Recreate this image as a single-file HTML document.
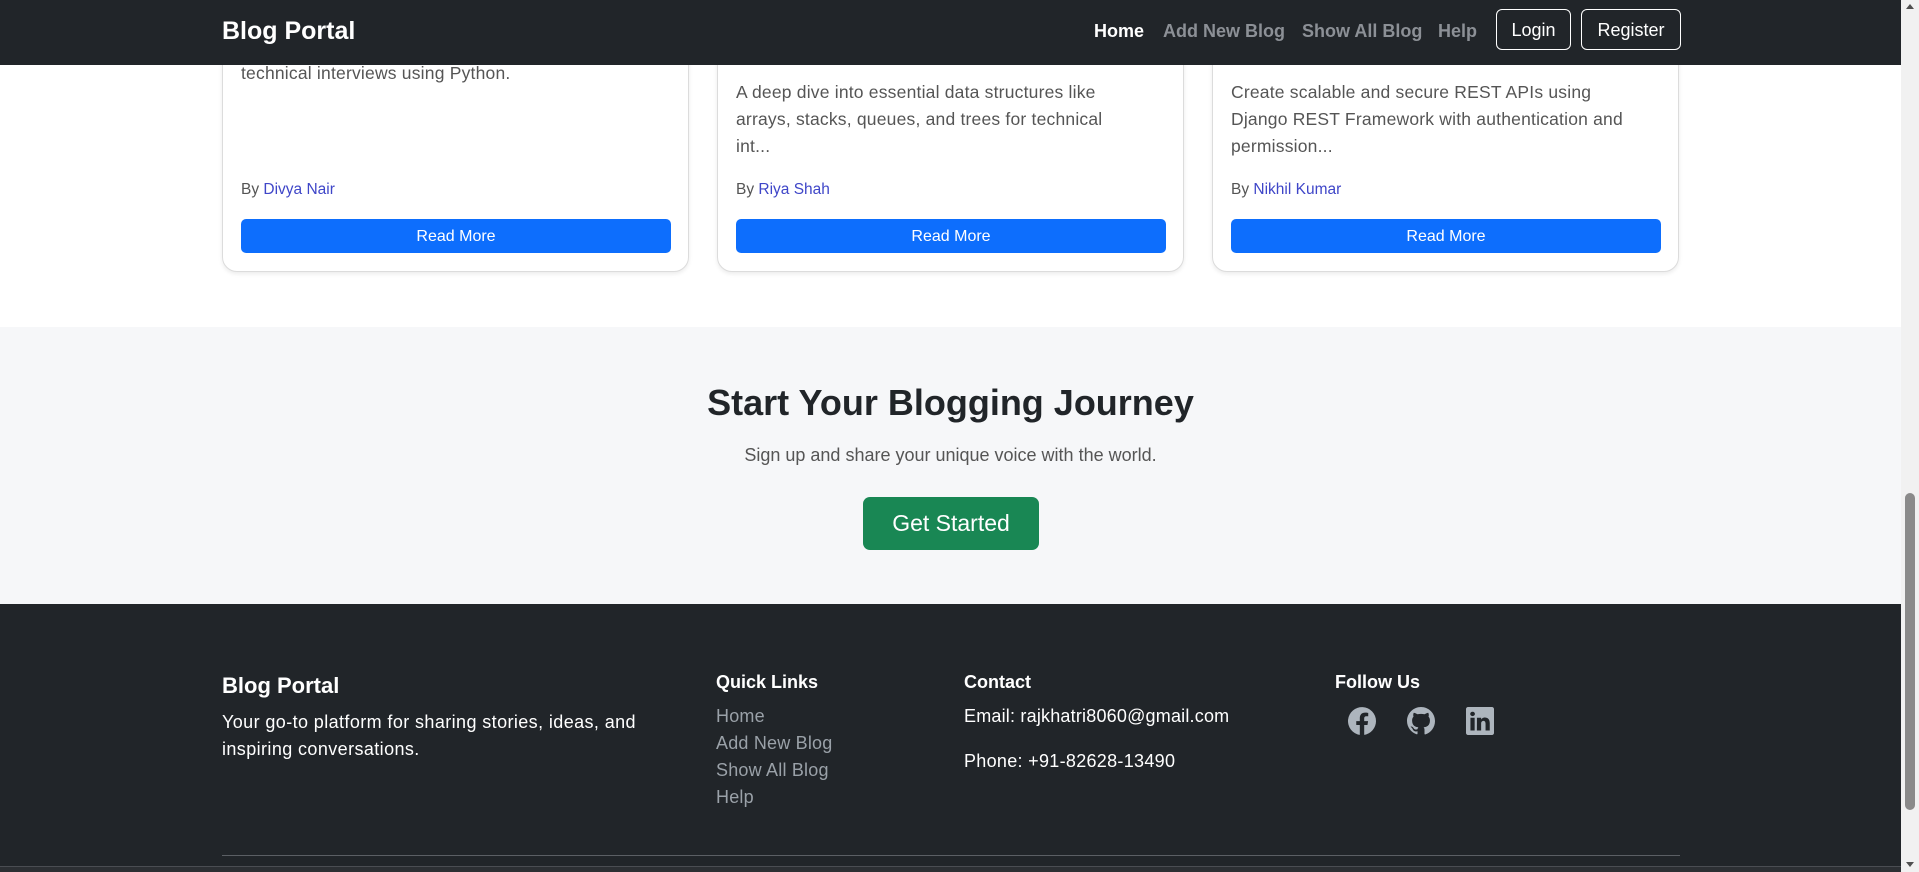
<!DOCTYPE html>
<html><head><meta charset="utf-8"><style>
*{margin:0;padding:0;box-sizing:border-box}
body{width:1919px;height:872px;overflow:hidden;font-family:"Liberation Sans",sans-serif;background:#fff;position:relative}
.a{position:absolute;white-space:nowrap}
.nav{position:absolute;left:0;top:0;width:1901px;height:65px;background:#212529}
.card{position:absolute;top:-20px;width:467px;height:292px;border:1px solid #dcdcdc;border-radius:15px;background:#fff;box-shadow:0 2px 4px rgba(0,0,0,.08)}
.txt{font-size:17.5px;color:#555;line-height:27px;letter-spacing:.2px}
.by{font-size:15.5px;color:#555}
.by span{color:#3f46c8}
.btn{position:absolute;height:34px;width:430px;background:#0d6efd;color:#fff;border-radius:5px;font-size:16px;text-align:center;line-height:35px}
.fl{font-size:18px;color:#9aa1a8;letter-spacing:.2px}
</style></head><body>
<div class="card" style="left:222px"></div>
<div class="card" style="left:717px"></div>
<div class="card" style="left:1212px"></div>
<div class="a txt" style="left:241px;top:60px">technical interviews using Python.</div>
<div class="a txt" style="left:736px;top:79px">A deep dive into essential data structures like<br>arrays, stacks, queues, and trees for technical<br>int...</div>
<div class="a txt" style="left:1231px;top:79px">Create scalable and secure REST APIs using<br>Django REST Framework with authentication and<br>permission...</div>
<div class="a by" style="left:241px;top:181px">By <span>Divya Nair</span></div>
<div class="a by" style="left:736px;top:181px">By <span>Riya Shah</span></div>
<div class="a by" style="left:1231px;top:181px">By <span>Nikhil Kumar</span></div>
<div class="btn" style="left:241px;top:219px">Read More</div>
<div class="btn" style="left:736px;top:219px">Read More</div>
<div class="btn" style="left:1231px;top:219px">Read More</div>

<div class="nav"></div>
<div class="a" style="left:222px;top:17px;font-size:25px;font-weight:bold;color:#fff">Blog Portal</div>
<div class="a" style="left:1094px;top:21px;font-size:18px;font-weight:bold;color:#fff">Home</div>
<div class="a" style="left:1163px;top:21px;font-size:18px;font-weight:bold;color:#8c9096">Add New Blog</div>
<div class="a" style="left:1302px;top:21px;font-size:18px;font-weight:bold;color:#8c9096">Show All Blog</div>
<div class="a" style="left:1438px;top:21px;font-size:18px;font-weight:bold;color:#8c9096">Help</div>
<div class="a" style="left:1496px;top:9px;width:75px;height:41px;border:1px solid #fff;border-radius:6px;color:#fff;font-size:18px;text-align:center;line-height:40px">Login</div>
<div class="a" style="left:1581px;top:9px;width:100px;height:41px;border:1px solid #fff;border-radius:6px;color:#fff;font-size:18px;text-align:center;line-height:40px">Register</div>

<div class="a" style="left:0;top:327px;width:1901px;height:277px;background:#f6f7f9"></div>
<div class="a" style="left:0;width:1901px;top:382px;text-align:center;font-size:36px;font-weight:bold;color:#212529">Start Your Blogging Journey</div>
<div class="a" style="left:0;width:1901px;top:445px;text-align:center;font-size:18px;color:#555">Sign up and share your unique voice with the world.</div>
<div class="a" style="left:863px;top:497px;width:176px;height:53px;background:#198754;border-radius:7px;color:#fff;font-size:23px;text-align:center;line-height:53px">Get Started</div>

<div class="a" style="left:0;top:604px;width:1901px;height:268px;background:#212529"></div>
<div class="a" style="left:222px;top:673px;font-size:22px;font-weight:bold;color:#fff">Blog Portal</div>
<div class="a" style="left:222px;top:709px;font-size:18px;color:#fff;line-height:27px;letter-spacing:.4px">Your go-to platform for sharing stories, ideas, and<br>inspiring conversations.</div>
<div class="a" style="left:716px;top:672px;font-size:18px;font-weight:bold;color:#fff">Quick Links</div>
<div class="a fl" style="left:716px;top:706px">Home</div>
<div class="a fl" style="left:716px;top:733px">Add New Blog</div>
<div class="a fl" style="left:716px;top:760px">Show All Blog</div>
<div class="a fl" style="left:716px;top:787px">Help</div>
<div class="a" style="left:964px;top:672px;font-size:18px;font-weight:bold;color:#fff">Contact</div>
<div class="a" style="left:964px;top:706px;font-size:18px;color:#fff;letter-spacing:.2px">Email: rajkhatri8060@gmail.com</div>
<div class="a" style="left:964px;top:751px;font-size:18px;color:#fff;letter-spacing:.3px">Phone: +91-82628-13490</div>
<div class="a" style="left:1335px;top:672px;font-size:18px;font-weight:bold;color:#fff">Follow Us</div>
<svg class="a" style="left:1348px;top:707px" width="28" height="28" viewBox="0 0 16 16"><path fill="#adb5bd" d="M16 8.05A8 8 0 1 0 6.750 15.95V10.3H4.72V8.05h2.03V6.3c0-2 1.2-3.12 3.020-3.12.88 0 1.79.16 1.79.16v1.97h-1c-1 0-1.3.62-1.3 1.25v1.5h2.22l-.35 2.25H9.26v5.64A8 8 0 0 0 16 8.05"/></svg>
<svg class="a" style="left:1407px;top:707px" width="28" height="28" viewBox="0 0 16 16"><path fill="#adb5bd" d="M8 0C3.58 0 0 3.58 0 8c0 3.54 2.29 6.53 5.47 7.59.4.07.55-.17.55-.38v-1.33c-2.23.48-2.7-1.07-2.7-1.07-.36-.92-.89-1.170-.89-1.17-.73-.5.05-.49.05-.49.8.06 1.23.83 1.23.83.72 1.22 1.87.87 2.33.66.07-.52.28-.87.51-1.07-1.78-.2-3.64-.89-3.64-3.95 0-.87.31-1.59.82-2.15-.08-.2-.36-1.02.08-2.12 0 0 .67-.21 2.2.82a7.6 7.6 0 0 1 4 0c1.53-1.04 2.2-.82 2.2-.82.44 1.1.16 1.92.08 2.12.51.56.82 1.27.82 2.15 0 3.07-1.87 3.75-3.65 3.95.29.25.54.73.54 1.48v2.2c0 .21.15.46.55.38A8 8 0 0 0 16 8c0-4.42-3.58-8-8-8"/></svg>
<svg class="a" style="left:1466px;top:707px" width="28" height="28" viewBox="0 0 16 16"><path fill="#adb5bd" d="M0 1.15C0 .52.53 0 1.18 0h13.64C15.47 0 16 .52 16 1.15v13.7c0 .63-.53 1.15-1.18 1.15H1.18C.53 16 0 15.48 0 14.85zM4.94 13.4V6.17H2.54v7.23zM3.74 5.18c.84 0 1.36-.55 1.36-1.25-.02-.71-.52-1.25-1.34-1.25S2.4 3.22 2.4 3.93c0 .7.52 1.25 1.32 1.25zm4.91 8.22V9.36c0-.21.02-.43.08-.58.17-.43.57-.88 1.23-.88.87 0 1.21.66 1.21 1.63v3.87h2.4V9.25c0-2.22-1.18-3.25-2.76-3.250-1.27 0-1.84.7-2.16 1.19v.03h-.02l.02-.03V6.17h-2.4c.03.68 0 7.230 0 7.23z"/></svg>
<div class="a" style="left:222px;top:855px;width:1458px;height:1px;background:#5b5f64"></div>
<div class="a" style="left:0;top:866px;width:1901px;height:6px;background:#2c2f33;border-top:1px solid #4a4d52"></div>

<div class="a" style="left:1901px;top:0;width:18px;height:872px;background:#f1f1f1"></div>
<div class="a" style="left:1905px;top:493px;width:10px;height:317px;background:#8a8a8a;border-radius:5px"></div>
<div class="a" style="left:1906px;top:4px;width:0;height:0;border-left:4px solid transparent;border-right:4px solid transparent;border-bottom:5px solid #505050"></div>
<div class="a" style="left:1906px;top:862px;width:0;height:0;border-left:4px solid transparent;border-right:4px solid transparent;border-top:5px solid #505050"></div>
</body></html>
